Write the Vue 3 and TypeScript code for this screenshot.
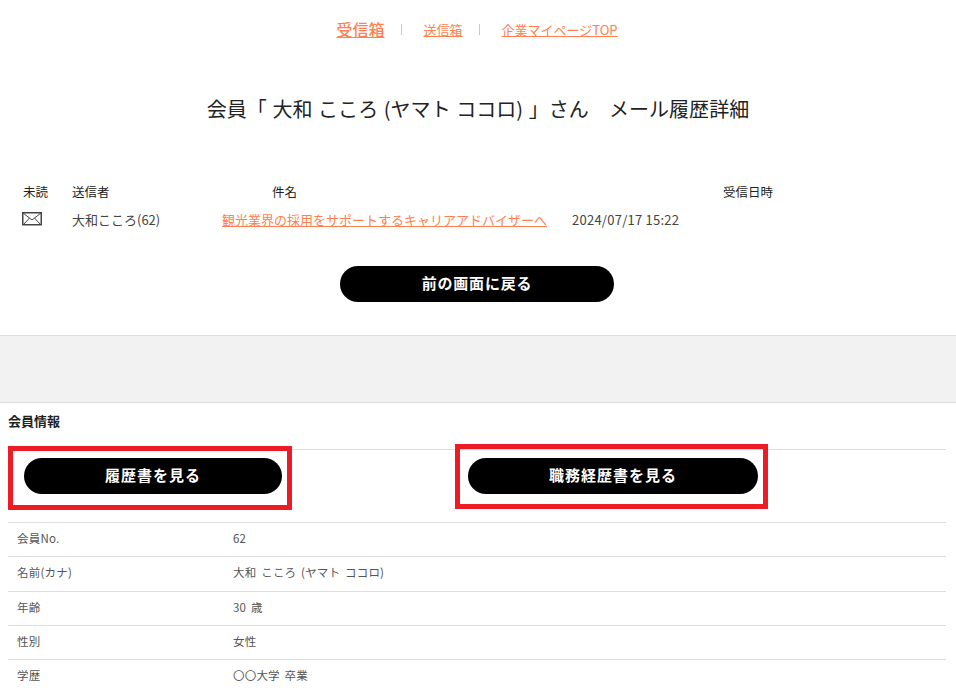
<script setup lang="ts">
// メール履歴詳細の表示データ
const profile = [
  { label: "会員No.", value: "62" },
  { label: "名前(カナ)", value: "大和 こころ (ヤマト ココロ)" },
  { label: "年齢", value: "30 歳" },
  { label: "性別", value: "女性" },
  { label: "学歴", value: "〇〇大学 卒業" },
];
</script>

<template>
  <div class="page">
    <nav class="nav">
      <a class="nav-main">受信箱</a>
      <span class="sep"></span>
      <a>送信箱</a>
      <span class="sep"></span>
      <a>企業マイページTOP</a>
    </nav>

    <h1 class="title">会員「 大和 こころ (ヤマト ココロ) 」さん　メール履歴詳細</h1>

    <div class="mail-head">
      <span class="c-unread">未読</span>
      <span class="c-from">送信者</span>
      <span class="c-subject-head">件名</span>
      <span class="c-date-head">受信日時</span>
    </div>
    <div class="mail-row">
      <span class="c-unread c-icon">
        <svg width="20" height="14" viewBox="0 0 20 14" fill="none" stroke="#444" stroke-width="1">
          <rect x="0.75" y="0.75" width="18.5" height="12" stroke-width="1.5" />
          <path d="M1 1l9 7 9-7M1 13l6.5-7M19 13l-6.5-7" />
        </svg>
      </span>
      <span class="c-from">大和こころ(62)</span>
      <a class="c-subject">観光業界の採用をサポートするキャリアアドバイザーへ</a>
      <span class="c-date">2024/07/17 15:22</span>
    </div>

    <div class="back-wrap">
      <button class="pill back">前の画面に戻る</button>
    </div>

    <div class="band"></div>

    <section class="member">
      <h2 class="member-title">会員情報</h2>
      <div class="doc-row">
        <button class="pill doc doc-resume">履歴書を見る</button>
        <button class="pill doc doc-career">職務経歴書を見る</button>
        <span class="mark mark-left"></span>
        <span class="mark mark-right"></span>
      </div>
      <div v-for="item in profile" :key="item.label" class="info-row">
        <span class="info-label">{{ item.label }}</span>
        <span class="info-value">{{ item.value }}</span>
      </div>
    </section>
  </div>
</template>

<style>
html,
body {
  margin: 0;
  background: #fff;
  overflow: hidden;
}
</style>

<style scoped>
.page {
  height: 691px;
  overflow: hidden;
  font-family: "Noto Sans CJK JP", "Liberation Sans", sans-serif;
  font-size: 13px;
  color: #222;
}
.nav {
  display: flex;
  justify-content: center;
  align-items: center;
  height: 20px;
  padding: 19px 2px 0 0;
  font-size: 13px;
}
.nav a {
  color: #ff7f50;
  text-decoration: underline;
}
.nav .nav-main {
  font-size: 16px;
  font-weight: 500;
}
.sep {
  width: 1px;
  height: 11px;
  margin: 0 21px 0 17px;
  background: #ccc;
}
.title {
  margin: 0;
  padding-top: 48px;
  height: 44px;
  line-height: 44px;
  text-align: center;
  font-size: 20px;
  font-weight: 400;
  word-spacing: 1px;
  letter-spacing: 0.05px;
  color: #222;
}
.mail-head,
.mail-row {
  display: flex;
  align-items: center;
  height: 20px;
}
.mail-head {
  margin-top: 50px;
  font-size: 12.5px;
}
.mail-row {
  margin-top: 8px;
  color: #444;
}
.c-unread {
  width: 49px;
  padding-left: 23px;
  display: flex;
}
.c-icon {
  width: 50px;
  padding-left: 22px;
}
.c-from {
  width: 150px;
}
.c-subject-head {
  width: 451px;
  padding-left: 50px;
}
.c-subject {
  width: 350px;
  color: #ff7f50;
  text-decoration: underline;
}
.c-date {
  white-space: nowrap;
  letter-spacing: 0.25px;
}
.pill {
  display: block;
  border: none;
  border-radius: 18px;
  background: #000;
  color: #fff;
  height: 36px;
  font-family: inherit;
  font-size: 15px;
  font-weight: 700;
  padding: 0 0 3px;
}
.back-wrap {
  display: flex;
  justify-content: center;
  margin-top: 37px;
  padding-right: 2px;
}
.back {
  width: 274px;
  letter-spacing: 0.8px;
}
.band {
  height: 66px;
  margin-top: 33px;
  background: #f2f2f2;
  border-top: 1px solid #ddd;
  border-bottom: 1px solid #ddd;
}
.member {
  padding: 0 10px 0 8px;
}
.member-title {
  margin: 0;
  height: 46px;
  line-height: 35px;
  font-size: 13px;
  font-weight: 700;
  color: #222;
  border-bottom: 1px solid #ddd;
}
.doc-row {
  position: relative;
  display: flex;
  height: 73px;
  padding-top: 8px;
  box-sizing: border-box;
  border-bottom: 1px solid #ddd;
}
.doc {
  letter-spacing: 1px;
}
.doc-resume {
  width: 258px;
  margin-left: 16px;
}
.doc-career {
  width: 290px;
  margin-left: 186px;
}
/* 赤枠の注釈 */
.mark {
  position: absolute;
  box-sizing: border-box;
  border: 5px solid #ed1c24;
}
.mark-left {
  left: 0;
  top: -4px;
  width: 284px;
  height: 64px;
}
.mark-right {
  left: 447px;
  top: -6px;
  width: 313px;
  height: 65px;
}
.info-row {
  display: flex;
  align-items: center;
  box-sizing: border-box;
  height: 34.3px;
  padding: 0 0 3px 9px;
  border-bottom: 1px solid #ddd;
  color: #555;
  font-size: 11.5px;
  letter-spacing: 0.2px;
  word-spacing: 2px;
}
.info-label {
  width: 216px;
}
</style>
